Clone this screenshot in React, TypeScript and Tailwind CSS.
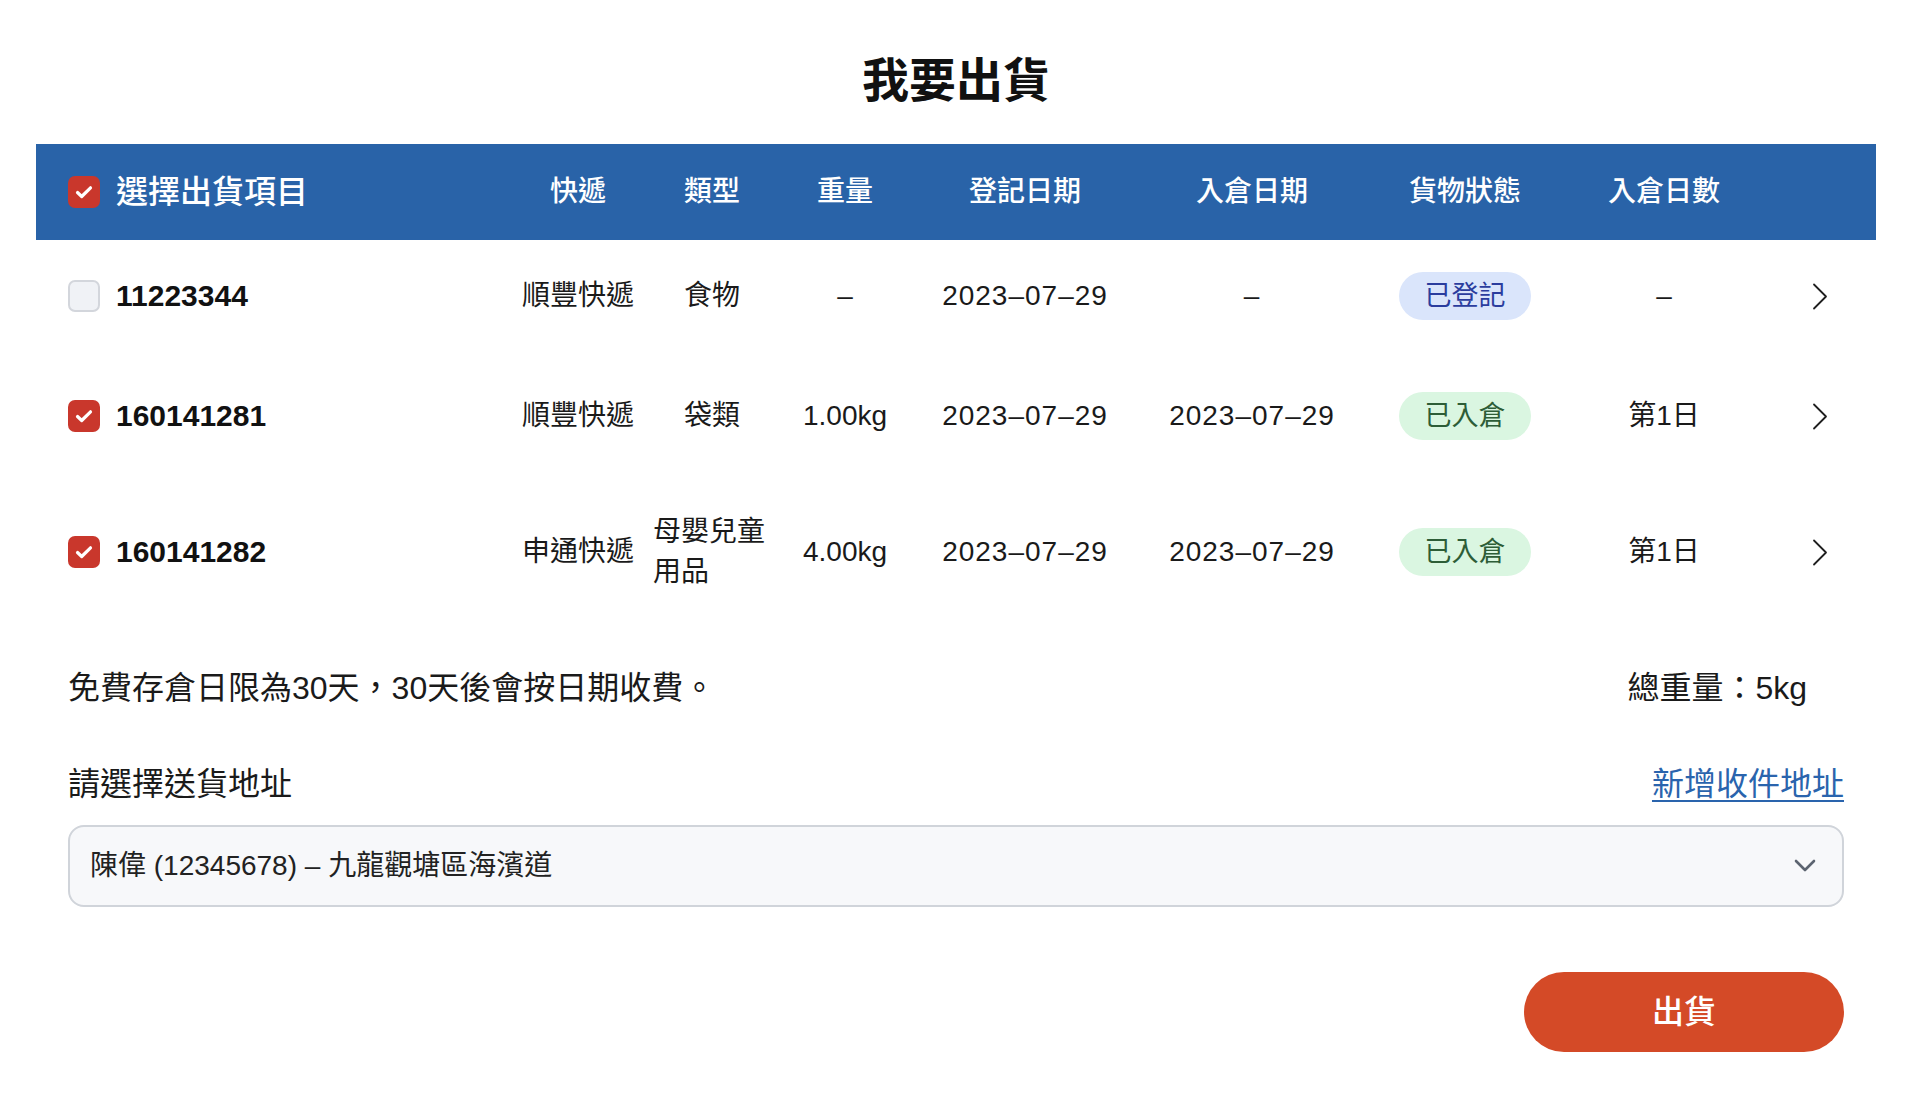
import React from "react";

function Check({ checked }: { checked: boolean }) {
  return checked ? (
    <span className="flex h-[32px] w-[32px] shrink-0 items-center justify-center rounded-[7px] bg-[#c9372c]">
      <svg width="18" height="14" viewBox="0 0 18 14">
        <path d="M2.5 7.5l4.2 4L15.5 2.8" fill="none" stroke="white" strokeWidth="3.2" strokeLinecap="round" strokeLinejoin="round" />
      </svg>
    </span>
  ) : (
    <span className="block h-[32px] w-[32px] shrink-0 rounded-[7px] border-2 border-[#d3d6dc] bg-[#f0f2f6]" />
  );
}

function Chevron() {
  return (
    <svg width="16" height="27" viewBox="0 0 16 27">
      <polyline points="2,1.5 14,13.5 2,25.5" fill="none" stroke="#1f1f1f" strokeWidth="1.8" strokeLinecap="round" strokeLinejoin="round" />
    </svg>
  );
}

type Row = {
  id: string;
  checked: boolean;
  courier: string;
  type: string;
  weight: string;
  reg: string;
  inDate: string;
  status: "reg" | "in";
  days: string;
};

const rows: Row[] = [
  { id: "11223344", checked: false, courier: "順豐快遞", type: "食物", weight: "–", reg: "2023–07–29", inDate: "–", status: "reg", days: "–" },
  { id: "160141281", checked: true, courier: "順豐快遞", type: "袋類", weight: "1.00kg", reg: "2023–07–29", inDate: "2023–07–29", status: "in", days: "第1日" },
  { id: "160141282", checked: true, courier: "申通快遞", type: "母嬰兒童用品", weight: "4.00kg", reg: "2023–07–29", inDate: "2023–07–29", status: "in", days: "第1日" },
];

const grid =
  "grid grid-cols-[443px_134px_134px_132px_228px_226px_200px_198px_113px] items-center pl-[32px]";

export default function App() {
  return (
    <div className="min-h-[1110px] w-full bg-white font-['Liberation_Sans','Noto_Sans_CJK_TC',sans-serif] text-[#1a1a1a]">
      <div className="ml-[36px] w-[1840px]">
        <div className="flex h-[144px] items-center justify-center pt-[16px]">
          <h1 className="text-[47px] font-bold leading-none text-[#111]">我要出貨</h1>
        </div>

        {/* header */}
        <div className={`${grid} h-[96px] bg-[#2963a8] text-white`}>
          <div className="flex items-center gap-[16px]">
            <Check checked />
            <span className="text-[32px] font-medium leading-[40px]">選擇出貨項目</span>
          </div>
          {["快遞", "類型", "重量", "登記日期", "入倉日期", "貨物狀態", "入倉日數"].map((h) => (
            <div key={h} className="text-center text-[28px] font-medium leading-[40px]">
              {h}
            </div>
          ))}
          <div />
        </div>

        {/* rows */}
        {rows.map((r, i) => (
          <div key={r.id} className={`${grid} ${i === 0 ? "pt-[32px] pb-[36px]" : "py-[36px]"}`}>
            <div className="flex items-center gap-[16px]">
              <Check checked={r.checked} />
              <span className="text-[30px] font-bold leading-[40px] text-[#111]">{r.id}</span>
            </div>
            <div className="text-center text-[28px] leading-[40px]">{r.courier}</div>
            <div className="flex justify-center">
              <span className="max-w-[118px] text-left text-[28px] leading-[40px]">{r.type}</span>
            </div>
            <div className="text-center text-[28px] leading-[40px]">{r.weight}</div>
            <div className="text-center text-[28px] leading-[40px] tracking-[1px]">{r.reg}</div>
            <div className="text-center text-[28px] leading-[40px] tracking-[1px]">{r.inDate}</div>
            <div className="flex justify-center">
              {r.status === "reg" ? (
                <span className="flex h-[48px] w-[132px] items-center justify-center rounded-full bg-[#dae5fb] text-[27px] text-[#2b3d9e]">
                  已登記
                </span>
              ) : (
                <span className="flex h-[48px] w-[132px] items-center justify-center rounded-full bg-[#daf6e1] text-[27px] text-[#2d5d37]">
                  已入倉
                </span>
              )}
            </div>
            <div className="text-center text-[28px] leading-[40px]">{r.days}</div>
            <div className="flex justify-center">
              <Chevron />
            </div>
          </div>
        ))}

        {/* bottom */}
        <div className="px-[32px]">
          <div className="mt-[36px] flex items-center justify-between text-[32px] leading-[48px]">
            <span>免費存倉日限為30天，30天後會按日期收費。</span>
            <span className="pr-[37px]">總重量：5kg</span>
          </div>

          <div className="mt-[48px] flex items-center justify-between text-[32px] leading-[48px]">
            <span>請選擇送貨地址</span>
            <a className="text-[#2a64ad] underline decoration-2 underline-offset-[5px]">新增收件地址</a>
          </div>

          <div className="mt-[17px] flex h-[82px] items-center justify-between rounded-[16px] border-2 border-[#d0d4da] bg-[#f7f8fa] pl-[20px] pr-[26px]">
            <span className="text-[28px] leading-[40px] text-[#222]">陳偉 (12345678) – 九龍觀塘區海濱道</span>
            <svg width="22" height="14" viewBox="0 0 22 14">
              <polyline points="2,2 11,11 20,2" fill="none" stroke="#5c6470" strokeWidth="2.6" strokeLinecap="round" strokeLinejoin="round" />
            </svg>
          </div>

          <div className="mt-[65px] flex justify-end">
            <button className="flex h-[80px] w-[320px] items-center justify-center rounded-full bg-[#d44a27] text-[32px] font-medium text-white">
              出貨
            </button>
          </div>
        </div>
      </div>
    </div>
  );
}
